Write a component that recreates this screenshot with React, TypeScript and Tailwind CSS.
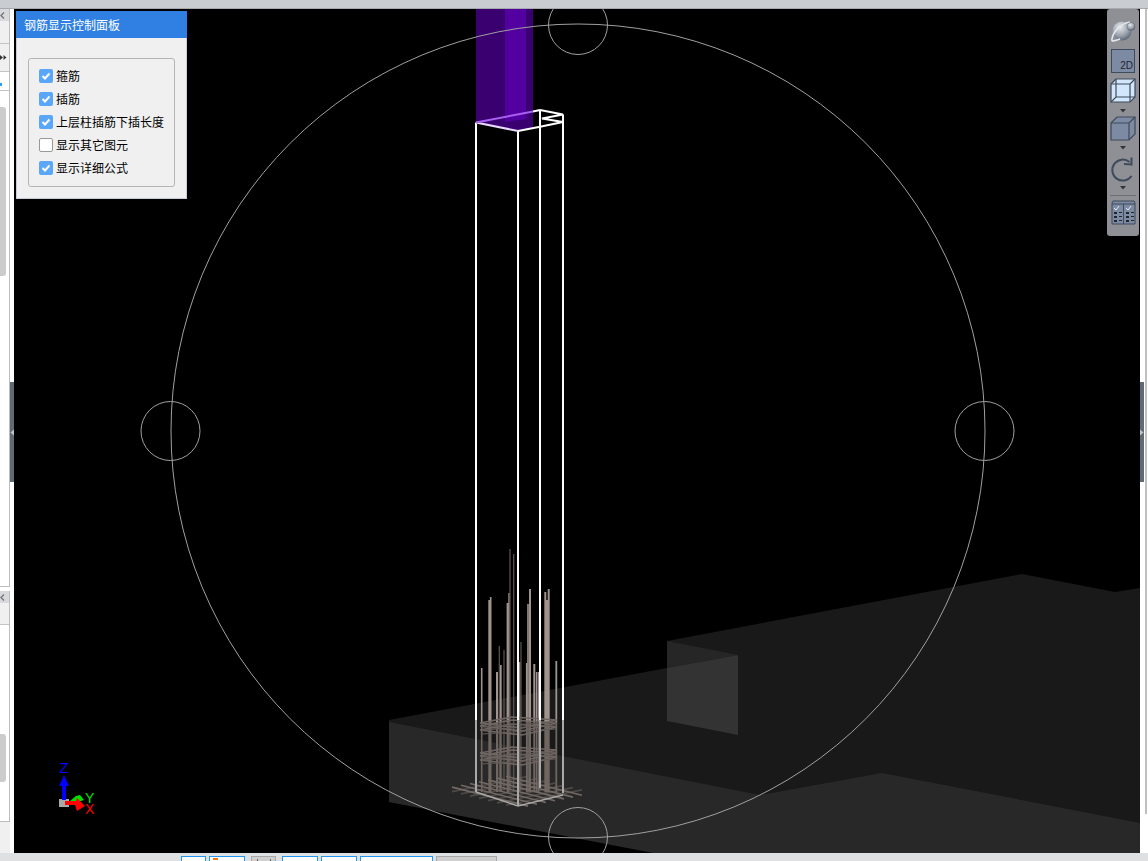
const CJK = { fontFamily: '"Noto Sans CJK SC", "Liberation Sans", sans-serif' };

const rebarThick: [number, number, number][] = [
  [481.7, 668, 1.6], [489.3, 600, 2], [490.7, 597, 1.6], [497, 672, 2], [500.7, 665, 2],
  [507.7, 603, 2.2], [509, 593, 1.4], [519.7, 662, 1.4], [526.7, 663, 1.6], [528, 604, 1.6],
  [530, 589, 2], [534.3, 664, 2], [536.7, 672, 1.6], [538.7, 672, 1.4], [545.3, 592, 2],
  [547, 600, 2], [548.7, 589, 2], [556.3, 661, 1.8],
];
const rebarThin: [number, number][] = [[499.3, 646], [504, 650], [510, 549], [513.7, 554], [521, 642]];

const rings = [0, 3, 7, 30, 33, 37];
const meshOffsets = [-28, -19, -10, -1, 8, 17, 26];

function Viewport() {
  return (
    <svg className="block w-full h-full" viewBox="14 9 1126 844" xmlns="http://www.w3.org/2000/svg">
      <rect x="14" y="9" width="1126" height="844" fill="#000" />
      {/* concrete */}
      <polygon points="389,720 667,668 667,641 1022,574 1115,592 1140,588 1140,830 882,780 760,800 389,730" fill="#191919" />
      <polygon points="389,722 760,795 882,773 1140,823 1140,853 653,853 389,802" fill="#282828" />
      <polygon points="667,641 738,655 667,668" fill="#262626" />
      <polygon points="667,668 738,655 738,735 667,721" fill="#333333" />
      {/* beam */}
      <polygon points="476,9 533,9 533,128 518,131 476,122" fill="#3a0070" />
      <polygon points="505,9 526,9 526,119 505,122" fill="#52009f" />
      {/* rebars */}
      {rebarThick.map(([x, y, w], i) => (
        <g key={i}>
          <line x1={x} y1={y} x2={x} y2={722} stroke="#a0938d" strokeWidth={w} />
          <line x1={x} y1={722} x2={x} y2={792} stroke="#6f6662" strokeWidth={w} />
        </g>
      ))}
      {rebarThin.map(([x, y], i) => (
        <line key={i} x1={x} y1={y} x2={x} y2={790} stroke="#5f5753" strokeWidth="1.2" />
      ))}
      {/* stirrups */}
      {rings.map((o) => (
        <polygon
          key={o}
          points={`480,${723 + o} 512,${717 + o} 557,${720 + o} 522,${728 + o}`}
          fill="none"
          stroke="#6f6662"
          strokeWidth="1.6"
        />
      ))}
      {rings.map((o) => (
        <line key={o} x1={482} y1={727 + o} x2={556} y2={722 + o} stroke="#625a56" strokeWidth="1.2" />
      ))}
      {/* base mesh */}
      {meshOffsets.map((t) => (
        <line
          key={t}
          x1={518 + t - 38}
          y1={791 + t * 0.25 + 7.6}
          x2={518 + t + 38}
          y2={791 + t * 0.25 - 7.6}
          stroke="#73696480"
          strokeWidth="1.6"
        />
      ))}
      {meshOffsets.map((t) => (
        <line
          key={t}
          x1={518 + t - 38}
          y1={791 - t * 0.2 - 9.5}
          x2={518 + t + 38}
          y2={791 - t * 0.2 + 9.5}
          stroke="#736964"
          strokeWidth="1.6"
        />
      ))}
      {/* column wireframe */}
      <g fill="none" stroke="#fff" strokeWidth="2">
        <polyline points="518,131 540,126.7 563,122" />
        <polyline points="540,110 563,114.5 542,118.5 563,122" />
        <polyline points="533,111.5 540,110" />
        <line x1="476" y1="122.5" x2="476" y2="720" />
        <line x1="518" y1="131" x2="518" y2="720" />
        <line x1="540" y1="110" x2="540" y2="720" />
        <line x1="563" y1="114.5" x2="563" y2="720" />
      </g>
      <polyline points="476,122.5 518,131" fill="none" stroke="#e8d8ff" strokeWidth="2" />
      <polyline points="476,122.5 533,111.5" fill="none" stroke="#a860f0" strokeWidth="2" />
      <g fill="none" stroke="#a9a9a9" strokeWidth="2">
        <line x1="476" y1="720" x2="476" y2="792" />
        <line x1="518" y1="720" x2="518" y2="806" />
        <line x1="540" y1="720" x2="540" y2="788" />
        <line x1="563" y1="720" x2="563" y2="793" />
        <polyline points="476,792 518,806 563,795" strokeWidth="1.4" />
      </g>
      {/* selection circles */}
      <g fill="none" stroke="#a0a0a0" strokeWidth="1">
        <circle cx="578" cy="431" r="407" />
        <circle cx="578" cy="25" r="29.5" />
        <circle cx="578" cy="837" r="29.5" />
        <circle cx="170.5" cy="431" r="29.5" />
        <circle cx="984.5" cy="431" r="29.5" />
      </g>
      {/* axis gizmo */}
      <rect x="59" y="799" width="10" height="8" fill="#a8a8a8" />
      <rect x="62" y="785" width="4" height="15" fill="#0000ff" />
      <polygon points="64,775 59,786 69,786" fill="#0000ff" />
      <polygon points="70,801 76,796 80,795 84,800 78,802" fill="#00e000" />
      <polygon points="65,801 76,801 77,798 85,806 77,811 75,805 65,805" fill="#ff0000" />
      <text x="59.5" y="773" fontSize="15" fill="#0000ff" fontFamily="Liberation Sans, sans-serif">Z</text>
      <text x="85" y="803" fontSize="14" fill="#00e000" fontFamily="Liberation Sans, sans-serif">Y</text>
      <text x="85" y="814" fontSize="14" fill="#ff0000" fontFamily="Liberation Sans, sans-serif">X</text>
    </svg>
  );
}

function Check({ checked, label }: { checked: boolean; label: string }) {
  return (
    <div className="flex items-center h-[14px] gap-[3px]">
      {checked ? (
        <span className="w-[14px] h-[14px] rounded-[2px] bg-[#5aa6f8] flex items-center justify-center">
          <svg width="10" height="10" viewBox="0 0 10 10">
            <polyline points="1.5,5 4,7.5 8.5,2.5" fill="none" stroke="#fff" strokeWidth="2" />
          </svg>
        </span>
      ) : (
        <span className="w-[14px] h-[14px] rounded-[2px] bg-white border border-[#999]" />
      )}
      <span className="text-[12px] leading-[14px] text-black whitespace-nowrap" style={CJK}>{label}</span>
    </div>
  );
}

function ControlPanel() {
  return (
    <div className="absolute left-[2px] top-[2px] w-[171px] h-[188px] bg-[#f0f0f0] border-b border-r border-l border-[#c8ccd8] flex flex-col">
      <div className="h-[27px] bg-[#2f80e2] text-white text-[12px] flex items-center pl-[8px] -mx-px" style={CJK}>
        钢筋显示控制面板
      </div>
      <div className="mt-[20px] ml-[11px] w-[147px] h-[129px] border border-[#b5b5b5] rounded-[3px] pl-[10px] pt-[10px] flex flex-col gap-[9px]">
        <Check checked label="箍筋" />
        <Check checked label="插筋" />
        <Check checked label="上层柱插筋下插长度" />
        <Check checked={false} label="显示其它图元" />
        <Check checked label="显示详细公式" />
      </div>
    </div>
  );
}

function Caret() {
  return (
    <svg width="8" height="5" viewBox="0 0 8 5" className="block">
      <polygon points="1,1 7,1 4,4.5" fill="#2f3540" />
    </svg>
  );
}

function Toolbar() {
  return (
    <div className="absolute right-[1px] top-0 w-[32px] h-[227px] bg-[#8e9096] rounded-[3px] flex flex-col items-center pt-[8px]">
      <svg width="26" height="26" viewBox="0 0 26 26" className="block">
        <defs>
          <radialGradient id="sph" cx="0.4" cy="0.3" r="0.8">
            <stop offset="0" stopColor="#e8eaee" />
            <stop offset="0.55" stopColor="#9aa3ae" />
            <stop offset="1" stopColor="#4b5663" />
          </radialGradient>
        </defs>
        <circle cx="12" cy="14" r="9.5" fill="url(#sph)" />
        <path d="M20 5 C12 6 3 14 2 22 C1 25 5 24 10 22" fill="none" stroke="#e4e6ea" strokeWidth="1.6" />
        <circle cx="21" cy="9.5" r="4" fill="url(#sph)" stroke="#5a6470" strokeWidth="0.5" />
      </svg>
      <div className="mt-[6px] w-[24px] h-[24px] bg-[#7c8aa3] border border-[#3f4a5b] flex items-end justify-end pr-[1px]">
        <span className="text-[10px] leading-[12px] text-[#1e2530]" style={{ fontFamily: '"Liberation Sans", sans-serif' }}>2D</span>
      </div>
      <svg width="26" height="25" viewBox="0 0 26 25" className="block mt-[5px]">
        <polygon points="1,6 6,1 25,1 25,19 20,24 1,24" fill="#d3e7fc" stroke="#3f4a5b" strokeWidth="1.2" />
        <path d="M1 6 H20 V24 M20 6 L25 1 M1 24 L6 19 H25 M6 1 V19" fill="none" stroke="#3f4a5b" strokeWidth="1.2" />
      </svg>
      <div className="mt-[5px]"><Caret /></div>
      <svg width="26" height="25" viewBox="0 0 26 25" className="block mt-[3px]">
        <polygon points="1,7 7,1 25,1 25,18 19,24 1,24" fill="#7c8aa3" stroke="#3f4a5b" strokeWidth="1.2" />
        <path d="M1 7 H19 V24 M19 7 L25 1" fill="none" stroke="#3f4a5b" strokeWidth="1.2" />
      </svg>
      <div className="mt-[4px]"><Caret /></div>
      <svg width="26" height="26" viewBox="0 0 26 26" className="block mt-[7px]">
        <path d="M21.5 19 A10.5 10.5 0 1 1 19.5 5" fill="none" stroke="#3f4a5b" strokeWidth="2" />
        <polyline points="14,7 21.5,7.5 21.5,0.5" fill="none" stroke="#3f4a5b" strokeWidth="2" />
      </svg>
      <div className="mt-[2px]"><Caret /></div>
      <div className="mt-[5px] w-[26px] h-px bg-[#6c6e74]" />
      <svg width="25" height="25" viewBox="0 0 25 25" className="block mt-[4px]">
        <path d="M2 1 H23 L24 3 V24 H1 V3 Z" fill="#7c8aa3" stroke="#3f4a5b" strokeWidth="1" />
        <line x1="1" y1="4" x2="24" y2="4" stroke="#3f4a5b" />
        <line x1="12.5" y1="4" x2="12.5" y2="24" stroke="#3f4a5b" />
        <path d="M3 8 L5 10 L8 6 M15 8 L17 10 L20 6" fill="none" stroke="#e8ecf2" strokeWidth="1" />
        <g fill="#1f2630">
          <rect x="3" y="12" width="3" height="2" /><rect x="8" y="12" width="3" height="1" />
          <rect x="3" y="16" width="3" height="2" /><rect x="8" y="16" width="3" height="1" />
          <rect x="3" y="20" width="3" height="2" /><rect x="8" y="20" width="3" height="1" />
          <rect x="15" y="12" width="3" height="2" /><rect x="20" y="12" width="3" height="1" />
          <rect x="15" y="16" width="3" height="2" /><rect x="20" y="16" width="3" height="1" />
          <rect x="15" y="20" width="3" height="2" /><rect x="20" y="20" width="3" height="1" />
        </g>
      </svg>
    </div>
  );
}

function PanelHeader() {
  return (
    <div className="h-[12px] bg-[#d8d9dc] flex items-center shrink-0">
      <svg width="5" height="7" viewBox="0 0 5 7" className="block">
        <polyline points="4,0.5 1,3.5 4,6.5" fill="none" stroke="#777" strokeWidth="1.4" />
      </svg>
    </div>
  );
}

function LeftColumn() {
  return (
    <div className="w-[14px] flex bg-white shrink-0">
      <div className="w-[10px] flex flex-col">
        <div className="h-[578px] flex flex-col border-r border-b border-[#bcbcbc] bg-white overflow-hidden">
          <PanelHeader />
          <div className="h-[23px] bg-[#f0f0f0] border-b border-[#c4c4c4] shrink-0" />
          <div className="h-[28px] bg-[#f0f0f0] border-b border-[#c4c4c4] shrink-0 flex items-center">
            <svg width="7" height="5" viewBox="0 0 7 5" className="block">
              <polygon points="0,0 0,5 3,2.5" fill="#333" />
              <polygon points="3.5,0 3.5,5 6.5,2.5" fill="#333" />
            </svg>
          </div>
          <div className="h-[19px] border-b border-[#c4c4c4] shrink-0 flex items-end pb-[4px]">
            <span className="w-[2px] h-[3px] bg-[#2f9cf0]" />
          </div>
          <div className="mt-[16px] w-[6px] h-[169px] bg-[#cccccc] rounded-r-[3px] shrink-0" />
        </div>
        <div className="h-[4px] shrink-0" />
        <div className="flex-1 flex flex-col min-h-0">
          <div className="flex-1 flex flex-col border-r border-b border-[#bcbcbc] bg-white">
            <PanelHeader />
            <div className="h-[22px] bg-[#f0f0f0] border-b border-[#c4c4c4] shrink-0" />
            <div className="mt-[109px] w-[6px] h-[48px] bg-[#cccccc] rounded-r-[3px]" />
          </div>
          <div className="h-[31px] bg-[#f0f0f0] shrink-0" />
        </div>
      </div>
      <div className="w-[4px] pt-[373px]">
        <div className="h-[100px] bg-[#5f6a75] flex items-center">
          <svg width="4" height="7" viewBox="0 0 4 7" className="block">
            <polygon points="0.5,3.5 4,0.5 4,6.5" fill="#c0c4c8" />
          </svg>
        </div>
      </div>
    </div>
  );
}

function RightColumn() {
  return (
    <div className="w-[8px] flex bg-white shrink-0">
      <div className="w-[4px] pt-[373px]">
        <div className="h-[100px] bg-[#5f6a75] flex items-center">
          <svg width="4" height="7" viewBox="0 0 4 7" className="block">
            <polygon points="3.5,3.5 0,0.5 0,6.5" fill="#c0c4c8" />
          </svg>
        </div>
      </div>
      <div className="w-[1px]" />
      <div className="w-[2px] h-[805px] bg-[#c0c0c4]" />
    </div>
  );
}

function BottomBar() {
  return (
    <div className="h-[8px] bg-[#dfe0e2] shrink-0 overflow-hidden flex pl-[181px] pt-[3px]">
      <div className="w-[25px] h-[12px] bg-white border border-[#2196f3] mr-[3px]" />
      <div className="w-[36px] h-[12px] bg-white border border-[#2196f3] mr-[6px] pl-[3px] pt-px">
        <div className="w-[5px] h-[2px] bg-[#f07818]" />
      </div>
      <div className="w-[25px] h-[12px] bg-[#cfcfcf] border border-[#a8a8a8] mr-[6px] flex justify-center gap-[12px] pt-[2px]">
        <div className="w-px h-[3px] bg-[#666]" />
        <div className="w-px h-[3px] bg-[#666]" />
      </div>
      <div className="w-[36px] h-[12px] bg-white border border-[#2196f3] mr-[3px]" />
      <div className="w-[36px] h-[12px] bg-white border border-[#2196f3] mr-[3px]" />
      <div className="w-[73px] h-[12px] bg-white border border-[#2196f3] mr-[3px]" />
      <div className="w-[61px] h-[12px] bg-[#cfcfcf] border border-[#a8a8a8]" />
    </div>
  );
}

export default function App() {
  return (
    <div className="w-[1148px] h-[861px] flex flex-col overflow-hidden bg-white">
      <div className="h-[9px] bg-[#c9ccd1] border-b border-[#a6a9ae] shrink-0" />
      <div className="flex-1 flex min-h-0">
        <LeftColumn />
        <div className="relative flex-1 min-w-0 bg-black">
          <Viewport />
          <ControlPanel />
          <Toolbar />
        </div>
        <RightColumn />
      </div>
      <BottomBar />
    </div>
  );
}
